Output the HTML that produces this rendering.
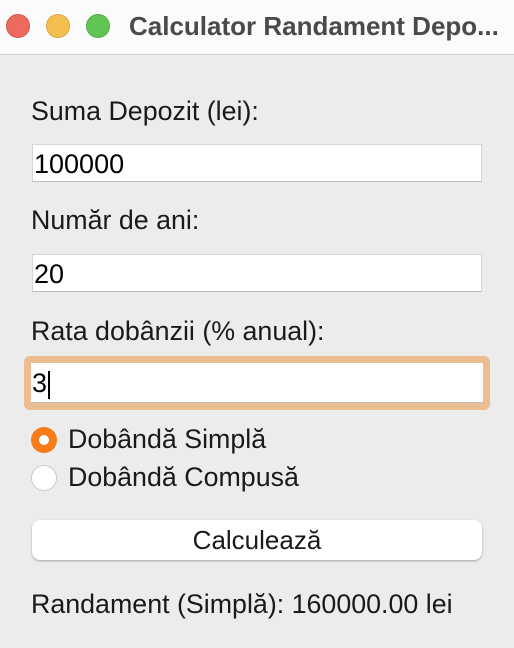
<!DOCTYPE html>
<html><head><style>
body{margin:0;width:514px;height:648px;background:#ececec;font-family:"Liberation Sans",sans-serif;position:relative;overflow:hidden;color:#1a1a1a}
.t{position:absolute;left:0;top:0;width:514px;height:54px;background:#fbfbfb;border-bottom:1px solid #d0d0d0}
.d{position:absolute;top:14px;width:24px;height:24px;border-radius:50%}
.tt{position:absolute;left:129px;top:11px;font-size:26px;line-height:30px;font-weight:bold;color:#4a4a4a;white-space:nowrap}
.l{position:absolute;left:31px;font-size:26.8px;line-height:26px;white-space:nowrap}
.f{position:absolute;left:32px;width:450px;height:38px;background:#fff;border:1px solid #d6d6d6;border-bottom-color:#bdbdbd;box-sizing:border-box;font-size:27px;line-height:38px;padding-left:1px;color:#000}
.r{position:absolute;left:31px;width:26px;height:26px;border-radius:50%;box-sizing:border-box}
</style></head><body>
<div class="t">
<div class="d" style="left:6px;background:#ed6a5e;border:1px solid #d9564c;box-sizing:border-box"></div>
<div class="d" style="left:46px;background:#f5bf4f;border:1px solid #dca540;box-sizing:border-box"></div>
<div class="d" style="left:86px;background:#61c554;border:1px solid #52ad45;box-sizing:border-box"></div>
<div class="tt">Calculator Randament Depo...</div>
</div>
<div class="l" style="top:98px">Suma Depozit (lei):</div>
<div class="f" style="top:144px">100000</div>
<div class="l" style="top:207px">Număr de ani:</div>
<div class="f" style="top:254px">20</div>
<div class="l" style="top:318px">Rata dobânzii (% anual):</div>
<div style="position:absolute;left:24px;top:356px;width:466px;height:54px;border-radius:6px;background:#ebbd91"></div>
<div class="f" style="top:363px;left:31px;width:452px;height:40px;border:none;border-bottom:1px solid #bdbdbd;line-height:40px">3<span style="display:inline-block;width:2px;height:28px;background:#000;vertical-align:middle;margin-left:1px"></span></div>
<div class="r" style="top:427px;background:#f57c1a;border:none"><div style="position:absolute;left:8px;top:8px;width:10px;height:10px;border-radius:50%;background:#fff"></div></div>
<div class="l" style="left:68px;top:426px">Dobândă Simplă</div>
<div class="r" style="top:465px;background:#fff;border:1px solid #ccc"></div>
<div class="l" style="left:68px;top:464px">Dobândă Compusă</div>
<div style="position:absolute;left:32px;top:520px;width:450px;height:40px;background:#fff;border-radius:8px;box-shadow:0 1px 2px rgba(0,0,0,.3);text-align:center;line-height:40px;font-size:26px">Calculează</div>
<div class="l" style="top:591px">Randament (Simplă): 160000.00 lei</div>
</body></html>
